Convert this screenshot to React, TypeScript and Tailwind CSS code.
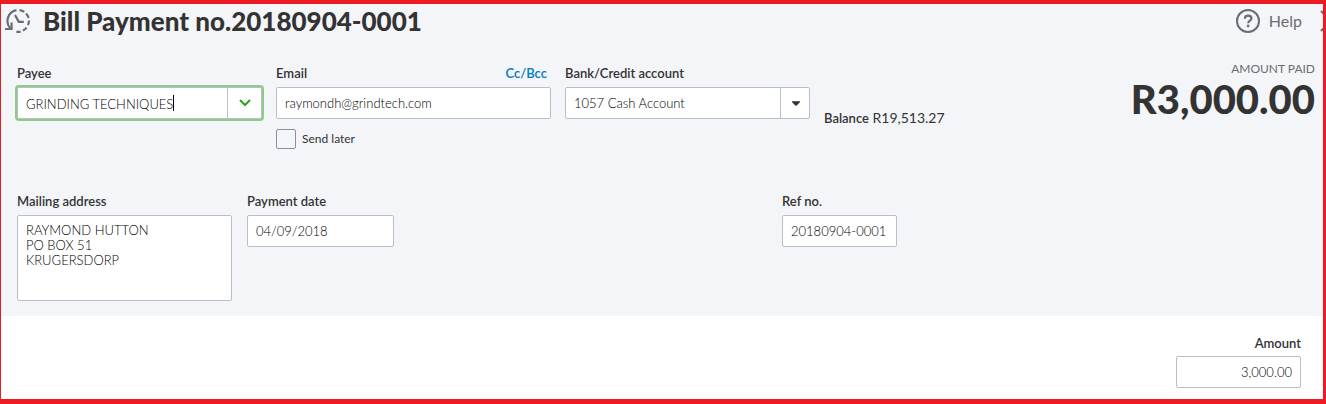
import { ReactNode, useState } from "react"
import { FaCaretDown } from "react-icons/fa"

interface FieldProps {
    id: string
    label: string
    className?: string
    extra?: ReactNode
    children: ReactNode
}

const boxStyles = "h-8 w-full rounded-xs border border-[#babec5] bg-white px-2 text-[13px] font-light text-black outline-none"

const Field: React.FC<FieldProps> = ({ id, label, className, extra, children }) => {
    return (
        <div className={className}>
            <div className="mb-[3px] flex h-5 items-center justify-between text-[13px] font-semibold">
                <label htmlFor={id}>{label}</label>
                {extra}
            </div>
            {children}
        </div>
    )
}

const HistoryIcon = () => (
    <svg width="26" height="26" viewBox="0 0 26 26" fill="none" stroke="#6b6c72" strokeWidth="2.2" aria-hidden="true">
        <path d="M11.5 2.2A11 11 0 0 0 5.4 20.5" />
        <path d="M0 21h6.6v-6.5" />
        <path d="M14.5 2.1a11 11 0 0 1 4.8 1.8M21 5.6a11 11 0 0 1 2.6 4.4M24 12.5a11 11 0 0 1-1 4.6M21.6 19.6a11 11 0 0 1-3.6 3M15.6 23.7a11 11 0 0 1-4.2 0" />
        <path d="M10 7l3.8 6.8h5" />
    </svg>
)

const HelpIcon = () => (
    <svg width="26" height="26" viewBox="0 0 26 26" fill="none" stroke="#6b6c72" aria-hidden="true">
        <circle cx="13" cy="13" r="11" strokeWidth="2" />
        <path d="M9.8 10.8c0-2 1.4-3.2 3.3-3.2s3.3 1.1 3.3 2.8c0 2.4-3.2 2.3-3.2 4.9" strokeWidth="2.2" />
        <circle cx="13.1" cy="18" r="1.4" fill="#6b6c72" stroke="none" />
    </svg>
)

const Header = () => (
    <header className="flex h-[34px] items-center justify-between pl-1">
        <div className="flex items-center gap-3">
            <button type="button" aria-label="Recent transactions" className="cursor-pointer">
                <HistoryIcon />
            </button>
            <h1 className="text-[26px] leading-8 font-black">Bill Payment no.20180904-0001</h1>
        </div>
        <div className="flex items-center gap-[18px]">
            <button type="button" className="flex cursor-pointer items-center gap-2 text-base text-[#6b6c72]">
                <HelpIcon />
                Help
            </button>
            <button type="button" aria-label="Close" className="flex w-[3px] cursor-pointer justify-start overflow-hidden">
                <svg width="24" height="24" viewBox="0 0 24 24" stroke="#6b6c72" strokeWidth="2" className="max-w-none shrink-0" aria-hidden="true">
                    <path d="M1 2l20 20M21 2L1 22" />
                </svg>
            </button>
        </div>
    </header>
)

const App = () => {
    const [payee, setPayee] = useState("GRINDING TECHNIQUES")
    const [email, setEmail] = useState("raymondh@grindtech.com")
    const [address, setAddress] = useState("RAYMOND HUTTON\nPO BOX 51\nKRUGERSDORP")
    const [date, setDate] = useState("04/09/2018")
    const [refNo, setRefNo] = useState("20180904-0001")
    const [amount, setAmount] = useState("3,000.00")

    return (
        <main className="border-t-4 border-r-3 border-b-5 border-l border-[#ed1c24] bg-white font-['Lato',sans-serif] text-[#333333]">
            <section className="bg-[#f4f5f8] pb-[15px]">
                <Header />

                <div className="mt-[22px] flex items-start justify-between pr-2 pl-4">
                    <div className="mt-1 flex items-start gap-[14px]">
                        <Field id="payee" label="Payee" className="w-[245px]">
                            <div className="flex h-8 rounded-xs border border-[#babec5] bg-white ring-2 ring-[#8ecb88]">
                                <div className="flex min-w-0 flex-1 items-center pl-2">
                                    <input
                                        id="payee"
                                        value={payee}
                                        onChange={(e) => setPayee(e.target.value)}
                                        className="field-sizing-content h-full max-w-full bg-transparent pt-px text-[13px] font-light text-black outline-none"
                                    />
                                    <span className="h-4 w-px bg-black" />
                                </div>
                                <button type="button" aria-label="Show payees" className="flex w-[34px] cursor-pointer items-center justify-center border-l border-[#babec5]">
                                    <svg width="12" height="8" viewBox="0 0 12 8" fill="none" stroke="#2ca01c" strokeWidth="2" aria-hidden="true">
                                        <path d="M1 1l5 5 5-5" />
                                    </svg>
                                </button>
                            </div>
                        </Field>

                        <div className="w-[275px]">
                            <Field
                                id="email"
                                label="Email"
                                extra={<a href="#cc" className="pr-1 text-[#0077c5]">Cc/Bcc</a>}
                            >
                                <input id="email" value={email} onChange={(e) => setEmail(e.target.value)} className={boxStyles} />
                            </Field>
                            <label className="mt-2.5 flex items-center gap-1.5 text-xs">
                                <input type="checkbox" className="size-5 appearance-none rounded-xs border border-[#8d9096] bg-[#f4f5f8]" />
                                Send later
                            </label>
                        </div>

                        <Field id="account" label="Bank/Credit account" className="w-[245px]">
                            <div className="relative">
                                <select id="account" className={`${boxStyles} appearance-none pt-px`}>
                                    <option>1057 Cash Account</option>
                                </select>
                                <span className="pointer-events-none absolute inset-y-0 right-0 my-px flex w-[30px] items-center justify-center border-l border-[#babec5]">
                                    <FaCaretDown className="size-3.5" />
                                </span>
                            </div>
                        </Field>

                        <p className="mt-11 text-sm">
                            <span className="text-[13px] font-semibold">Balance</span> R19,513.27
                        </p>
                    </div>

                    <div className="pt-px text-right">
                        <p className="text-xs leading-4 text-[#6b6c72]">AMOUNT PAID</p>
                        <p className="text-[40px] leading-11 font-black">R3,000.00</p>
                    </div>
                </div>

                <div className="mt-[43px] flex items-start pl-4">
                    <Field id="address" label="Mailing address" className="w-[215px]">
                        <textarea
                            id="address"
                            rows={4}
                            value={address}
                            onChange={(e) => setAddress(e.target.value)}
                            className="block h-[86px] w-full resize-none rounded-xs border border-[#babec5] bg-white px-2 py-[7px] text-[13px] leading-[15px] font-light text-black outline-none"
                        />
                    </Field>
                    <Field id="date" label="Payment date" className="ml-[15px] w-[147px]">
                        <input id="date" value={date} onChange={(e) => setDate(e.target.value)} className={boxStyles} />
                    </Field>
                    <Field id="ref" label="Ref no." className="ml-97 w-[115px]">
                        <input id="ref" value={refNo} onChange={(e) => setRefNo(e.target.value)} className={boxStyles} />
                    </Field>
                </div>
            </section>

            <section className="flex justify-end pt-[17px] pr-[22px] pb-[11px]">
                <div className="w-[125px]">
                    <label htmlFor="amount" className="mb-[3px] block text-right text-[13px] leading-5 font-semibold">Amount</label>
                    <input id="amount" value={amount} onChange={(e) => setAmount(e.target.value)} className={`${boxStyles} block text-right`} />
                </div>
            </section>
        </main>
    )
}

export default App
